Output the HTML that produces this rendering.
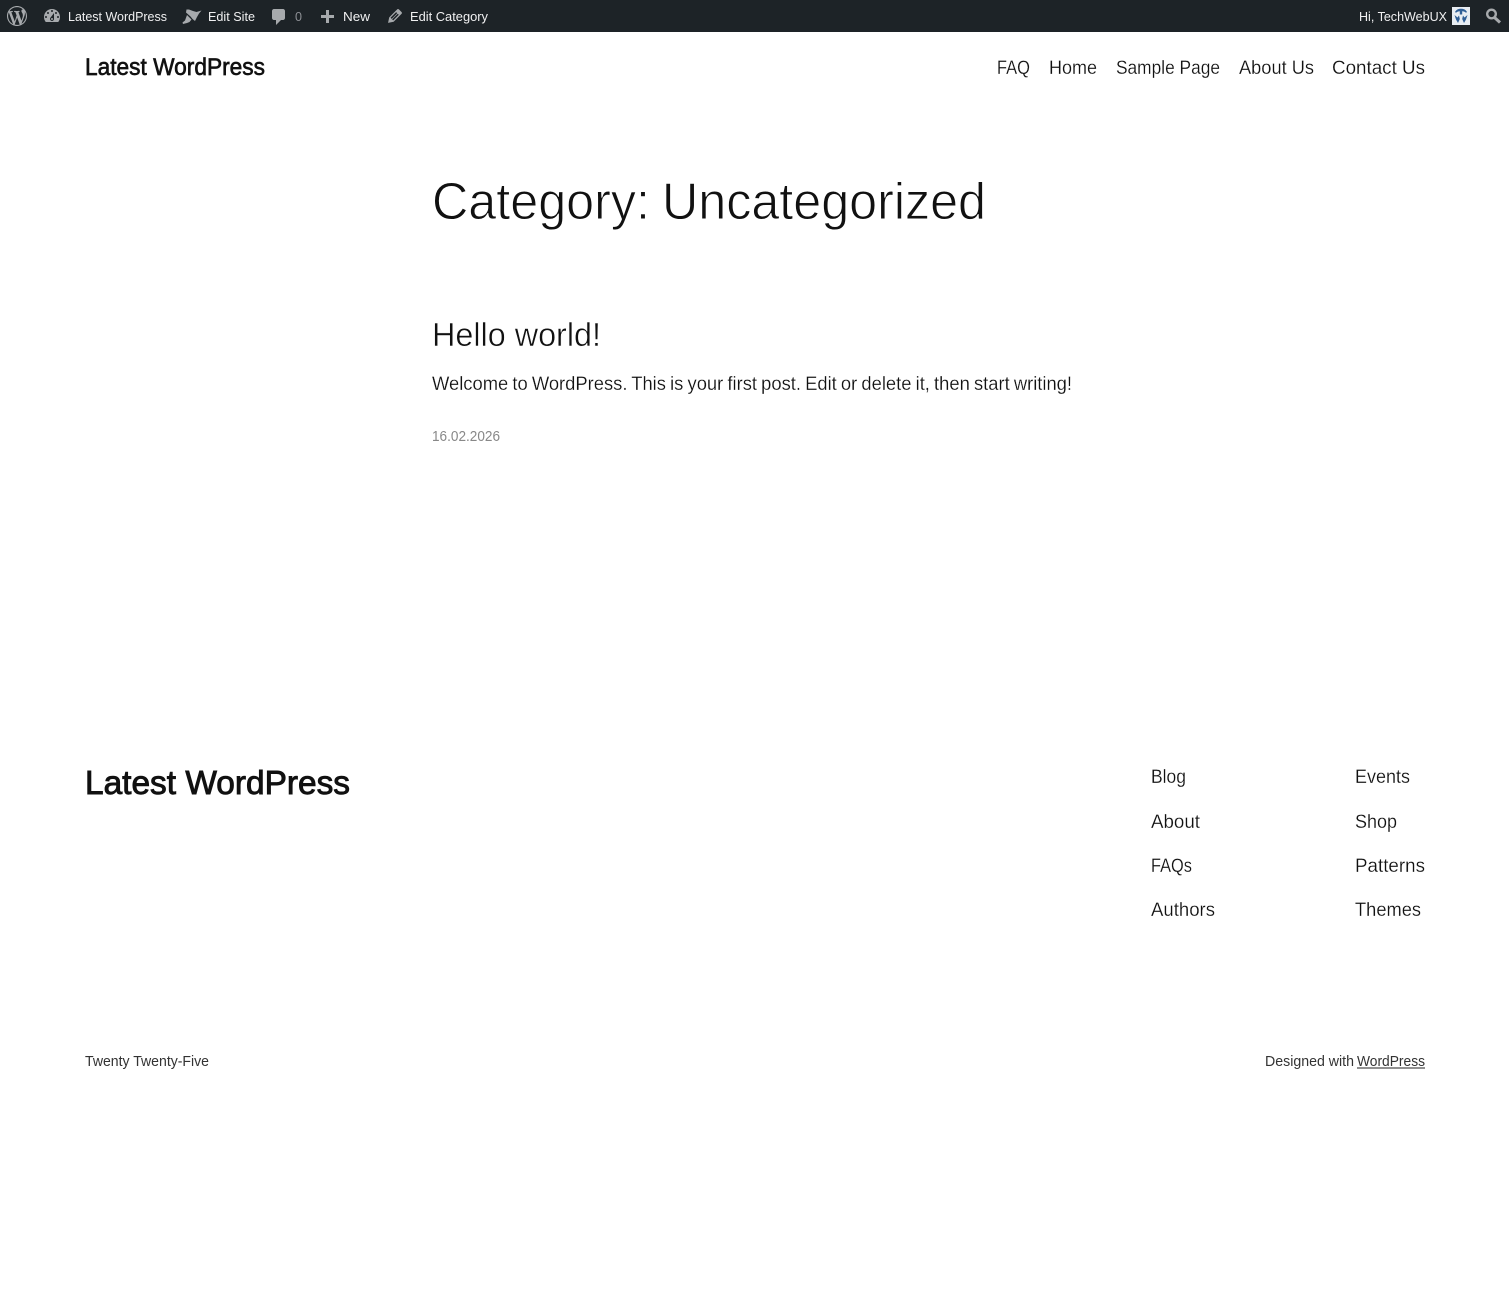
<!DOCTYPE html>
<html lang="en"><head><meta charset="utf-8"><title>Category: Uncategorized – Latest WordPress</title>
<style>
html,body{margin:0;padding:0;background:#fff;width:1509px;height:1289px;overflow:hidden}
svg{display:block}
text{font-family:"Liberation Sans",sans-serif;fill:#111;white-space:pre}
.bar text{font-size:13px;fill:#f0f0f1}
.ic{fill:#a7aaad}
.nav text{font-size:19.5px;fill:#111;stroke:#fff;stroke-width:.2px}
.thin{stroke:#fff}
.bold{stroke:#111}
</style></head><body>
<svg width="1509" height="1289" viewBox="0 0 1509 1289" xmlns="http://www.w3.org/2000/svg">
<g class="bar">
<rect width="1509" height="32" fill="#1d2327"/>
<path class="ic" transform="translate(7 6)" d="M20 10c0-5.51-4.49-10-10-10C4.48 0 0 4.49 0 10c0 5.52 4.48 10 10 10 5.51 0 10-4.48 10-10zM7.78 15.37L4.37 6.22c.55-.02 1.17-.08 1.17-.08.5-.06.44-1.13-.06-1.11 0 0-1.45.11-2.37.11-.18 0-.37 0-.58-.01C4.12 2.69 6.87 1.11 10 1.11c2.33 0 4.45.87 6.05 2.34-.68-.11-1.65.39-1.65 1.58 0 .74.45 1.36.9 2.1.35.61.55 1.36.55 2.46 0 1.49-1.4 5-1.4 5l-3.03-8.37c.54-.02.82-.17.82-.17.5-.05.44-1.25-.06-1.22 0 0-1.44.12-2.38.12-.87 0-2.33-.12-2.33-.12-.5-.03-.56 1.2-.06 1.22l.92.08 1.26 3.41zM17.41 10c.24-.64.74-1.87.43-4.25.7 1.29 1.05 2.71 1.05 4.25 0 3.29-1.73 6.24-4.4 7.78.97-2.59 1.94-5.2 2.92-7.78zM6.1 18.09C3.12 16.65 1.11 13.53 1.11 10c0-1.3.23-2.48.72-3.59C3.25 10.3 4.67 14.2 6.1 18.09zm4.03-6.63l2.58 6.98c-.86.29-1.76.45-2.71.45-.79 0-1.57-.11-2.29-.33.81-2.38 1.62-4.74 2.42-7.1z"/>
<path class="ic" transform="translate(42 6)" d="M3.76 16h12.48c1.1-1.37 1.76-3.11 1.76-5 0-4.42-3.58-8-8-8s-8 3.58-8 8c0 1.89.66 3.63 1.76 5zM10 4c.55 0 1 .45 1 1s-.45 1-1 1-1-.45-1-1 .45-1 1-1zM6 6c.55 0 1 .45 1 1s-.45 1-1 1-1-.45-1-1 .45-1 1-1zm8 0c.55 0 1 .45 1 1s-.45 1-1 1-1-.45-1-1 .45-1 1-1zm-5.37 5.55L12 7v6c0 1.1-.9 2-2 2s-2-.9-2-2c0-.57.24-1.08.63-1.45zM4 10c.55 0 1 .45 1 1s-.45 1-1 1-1-.45-1-1 .45-1 1-1zm12 0c.55 0 1 .45 1 1s-.45 1-1 1-1-.45-1-1 .45-1 1-1zm-5 3c0-.55-.45-1-1-1s-1 .45-1 1 .45 1 1 1 1-.45 1-1z"/>
<text x="68" y="21" textLength="99" lengthAdjust="spacingAndGlyphs">Latest WordPress</text>
<path class="ic" d="M186.500 9.500L189 9.500L193 11L196.500 12L201.500 10.500L199 13.500L197 17L195 21L192.500 19L190.500 16.500L186 12.500ZM187 15L191.500 19.500L189.500 22L187 23L183 24L182.500 22.500L185 20.500Z"/>
<text x="208" y="21" textLength="47" lengthAdjust="spacingAndGlyphs">Edit Site</text>
<path class="ic" transform="translate(269 7)" d="M5 2h9c1.100 0 2 .9 2 2v7c0 1.100-.9 2-2 2h-2l-5 5v-5H5c-1.100 0-2-.9-2-2V4c0-1.100.9-2 2-2z"/>
<text x="295" y="21" textLength="7" lengthAdjust="spacingAndGlyphs" style="fill:#8c8f94">0</text>
<path class="ic" d="M326 10h3v5h5v3h-5v5h-3v-5h-5v-3h5z"/>
<text x="343" y="21" textLength="27" lengthAdjust="spacingAndGlyphs">New</text>
<path class="ic" transform="translate(385 6)" d="M13.890 3.390l2.710 2.720c.46.46.42 1.240.03 1.640l-8.010 8.020-5.560 1.160 1.160-5.580s7.600-7.630 7.990-8.030c.39-.39 1.220-.39 1.680.07zm-2.730 2.790l-5.590 5.610 1.110 1.110 5.540-5.650zm-2.970 8.230l5.580-5.600-1.070-1.080-5.590 5.600z"/>
<text x="410" y="21" textLength="78" lengthAdjust="spacingAndGlyphs">Edit Category</text>
<text x="1359" y="21" textLength="88" lengthAdjust="spacingAndGlyphs">Hi, TechWebUX</text>
<rect x="1452" y="7" width="18" height="18" fill="#e8edf2"/>
<path fill="#2f5f96" d="M1455 12c1.500-2.500 3.500-3.200 6-3.200s4.500.7 6 3.200l-1 .8c-1-1-2.500-1.500-3.800-1.500v3.200h-2.400v-3.200c-1.300 0-2.800.5-3.800 1.500zM1454.500 15l3 2.500 1.500-2 .8 3.500-1.800 4-2-3.500zM1467.500 15l-3 2.500-1.500-2-.8 3.500 1.800 4 2-3.500z"/>
<circle cx="1491.500" cy="14" r="4.300" fill="none" stroke="#a7aaad" stroke-width="2.400"/>
<path d="M1494.500 17.500l5.500 5" stroke="#a7aaad" stroke-width="3" fill="none"/>
</g>
<a href="#"><text x="85" y="75" font-size="24" class="bold" style="stroke-width:.65px" textLength="180" lengthAdjust="spacingAndGlyphs">Latest WordPress</text></a>
<g class="nav">
<text x="997" y="74" textLength="33" lengthAdjust="spacingAndGlyphs">FAQ</text>
<text x="1049" y="74" textLength="48" lengthAdjust="spacingAndGlyphs">Home</text>
<text x="1116" y="74" textLength="104" lengthAdjust="spacingAndGlyphs">Sample Page</text>
<text x="1239" y="74" textLength="75" lengthAdjust="spacingAndGlyphs">About Us</text>
<text x="1332" y="74" textLength="93" lengthAdjust="spacingAndGlyphs">Contact Us</text>
</g>
<text x="432" y="219" font-size="52" class="thin" style="stroke-width:.9px" textLength="218" lengthAdjust="spacingAndGlyphs">Category:</text>
<text x="662" y="219" font-size="52" class="thin" style="stroke-width:.9px" textLength="324" lengthAdjust="spacingAndGlyphs">Uncategorized</text>
<text x="432" y="346" font-size="33" class="thin" style="stroke-width:.5px" textLength="169" lengthAdjust="spacingAndGlyphs">Hello world!</text>
<text x="432" y="390" font-size="19.500" class="thin" style="stroke-width:.2px;word-spacing:-1px" textLength="640" lengthAdjust="spacingAndGlyphs">Welcome to WordPress. This is your first post. Edit or delete it, then start writing!</text>
<text x="432" y="441" font-size="14.500" style="fill:#888" textLength="68" lengthAdjust="spacingAndGlyphs">16.02.2026</text>
<text x="85" y="794" font-size="33" class="bold" style="stroke-width:.9px" textLength="265" lengthAdjust="spacingAndGlyphs">Latest WordPress</text>
<g class="nav">
<text x="1151" y="783" textLength="35" lengthAdjust="spacingAndGlyphs">Blog</text>
<text x="1151" y="828" textLength="49" lengthAdjust="spacingAndGlyphs">About</text>
<text x="1151" y="872" textLength="41" lengthAdjust="spacingAndGlyphs">FAQs</text>
<text x="1151" y="916" textLength="64" lengthAdjust="spacingAndGlyphs">Authors</text>
<text x="1355" y="783" textLength="55" lengthAdjust="spacingAndGlyphs">Events</text>
<text x="1355" y="828" textLength="42" lengthAdjust="spacingAndGlyphs">Shop</text>
<text x="1355" y="872" textLength="70" lengthAdjust="spacingAndGlyphs">Patterns</text>
<text x="1355" y="916" textLength="66" lengthAdjust="spacingAndGlyphs">Themes</text>
</g>
<text x="85" y="1066" font-size="14.500" style="fill:#333" textLength="124" lengthAdjust="spacingAndGlyphs">Twenty Twenty-Five</text>
<text x="1265" y="1066" font-size="14.500" style="fill:#333" textLength="89" lengthAdjust="spacingAndGlyphs">Designed with</text>
<text x="1357" y="1066" font-size="14.500" style="fill:#333" textLength="68" lengthAdjust="spacingAndGlyphs">WordPress</text>
<rect x="1357" y="1067.500" width="68" height="1" fill="#222"/>
</svg>
</body></html>
